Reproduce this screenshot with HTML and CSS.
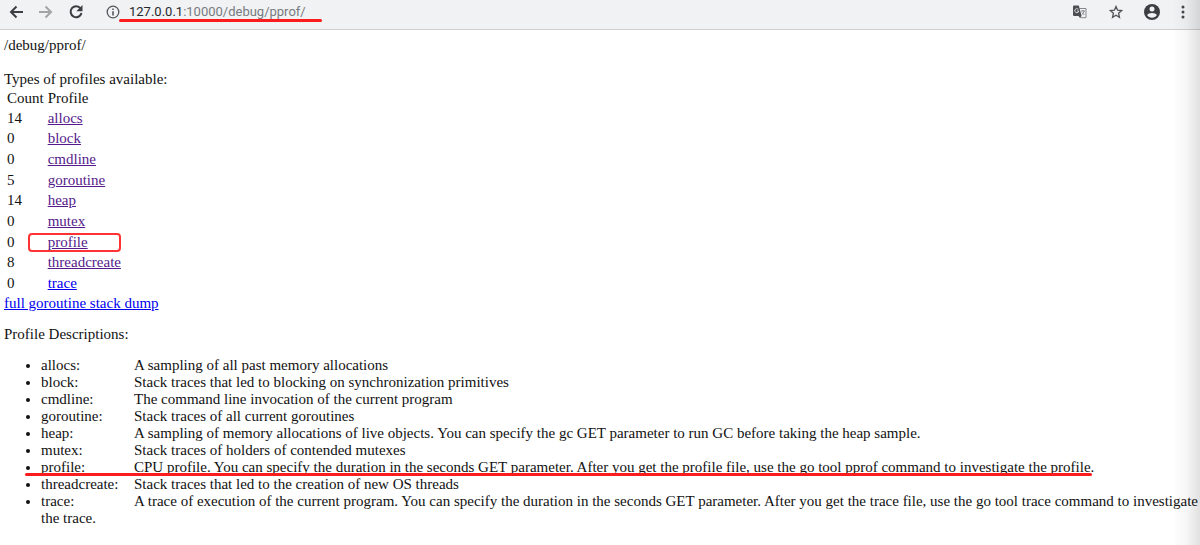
FILE: index.html
```html
<!DOCTYPE html>
<html lang="en">
<head>
<meta charset="utf-8">
<title>/debug/pprof/</title>
<link rel="stylesheet" href="styles.css">
</head>
<body>
<header class="toolbar">
  <button class="tool" aria-label="Back"><svg width="16" height="16" viewBox="0 0 16 16" fill="none" stroke="#3c3f42" stroke-width="2"><path d="M15 8H3M8.500 2.500L3 8l5.500 5.500"/></svg></button>
  <button class="tool" aria-label="Forward"><svg width="16" height="16" viewBox="0 0 16 16" fill="none" stroke="#a2a4a6" stroke-width="2"><path d="M1 8h12M7.500 2.500L13 8l-5.500 5.500"/></svg></button>
  <button class="tool" aria-label="Reload"><svg width="16" height="16" viewBox="0 0 16 16"><path d="M12.600 4.500A5.500 5.500 0 1 0 13.500 9" fill="none" stroke="#3c3f42" stroke-width="2"/><path d="M14.500 1v6.200H8.300z" fill="#3c3f42"/></svg></button>
  <div class="omnibox">
    <button class="tool" aria-label="Site information"><svg width="14" height="14" viewBox="0 0 14 14"><circle cx="7" cy="7" r="5.800" fill="none" stroke="#55585b" stroke-width="1.300"/><path d="M6.200 6.200h1.600v4.200H6.200zM6.200 3.600h1.600v1.500H6.200z" fill="#55585b"/></svg></button>
    <div class="address marked" role="textbox" contenteditable="true" spellcheck="false" aria-label="Address"><span class="host">127.0.0.1</span>:10000/debug/pprof/</div>
  </div>
  <div class="actions">
    <button class="tool" aria-label="Translate"><svg width="16" height="16" viewBox="0 0 16 16"><path d="M7.500 4.500H14v9.200H8.500" fill="#f1f2f4" stroke="#85888b"/><path d="M9 7h4M11 6v1M12.200 7.200c-.4 1.500-1.300 2.600-2.400 3.300M10 8.500l2.500 2.500" fill="none" stroke="#85888b"/><path d="M2 1.500h4.800L9.600 12H2a1 1 0 0 1-1-1V2.500a1 1 0 0 1 1-1z" fill="#4c4f52"/><path d="M6.300 5.300A2 2 0 1 0 6.800 7H5" fill="none" stroke="#d5d7d9"/><path d="M6.500 12h3l-1.500 2z" fill="#4c4f52"/></svg></button>
    <button class="tool" aria-label="Bookmark this page"><svg width="14" height="14" viewBox="0 0 14 14"><path d="M7 1.500l1.600 3.700 4 .4-3 2.700.9 4L7 10.200l-3.500 2.100.9-4-3-2.700 4-.4z" fill="none" stroke="#505356" stroke-width="1.300"/></svg></button>
    <button class="tool" aria-label="Profile"><svg width="16" height="16" viewBox="0 0 16 16"><circle cx="8" cy="8" r="8" fill="#3c3f42"/><circle cx="8" cy="5" r="2.500" fill="#f1f2f4"/><path d="M3.200 11.200C3.700 9.600 5.700 8.900 8 8.900s4.300.7 4.800 2.300C11.800 12.800 10 13.700 8 13.700s-3.800-.9-4.800-2.500z" fill="#f1f2f4"/></svg></button>
    <button class="tool" aria-label="Menu"><svg width="4" height="14" viewBox="0 0 4 14" fill="#45484b"><circle cx="2" cy="2" r="1.500"/><circle cx="2" cy="7" r="1.500"/><circle cx="2" cy="12" r="1.500"/></svg></button>
  </div>
</header>
<main class="page">
  <p class="path">/debug/pprof/</p>
  <p class="intro">Types of profiles available:</p>
  <table class="profiles">
    <thead><tr><th>Count</th><th>Profile</th></tr></thead>
    <tbody>
      <tr><td>14</td><td><a class="visited" href="#allocs">allocs</a></td></tr>
      <tr><td>0</td><td><a class="visited" href="#block">block</a></td></tr>
      <tr><td>0</td><td><a class="visited" href="#cmdline">cmdline</a></td></tr>
      <tr><td>5</td><td><a class="visited" href="#goroutine">goroutine</a></td></tr>
      <tr><td>14</td><td><a class="visited" href="#heap">heap</a></td></tr>
      <tr><td>0</td><td><a class="visited" href="#mutex">mutex</a></td></tr>
      <tr><td>0</td><td class="boxed"><a class="visited" href="#profile">profile</a></td></tr>
      <tr><td>8</td><td><a class="visited" href="#threadcreate">threadcreate</a></td></tr>
      <tr><td>0</td><td><a href="#trace">trace</a></td></tr>
    </tbody>
  </table>
  <a href="#stack">full goroutine stack dump</a>
  <p class="heading">Profile Descriptions:</p>
  <ul class="descriptions">
    <li><span class="name">allocs:</span>A sampling of all past memory allocations</li>
    <li><span class="name">block:</span>Stack traces that led to blocking on synchronization primitives</li>
    <li><span class="name">cmdline:</span>The command line invocation of the current program</li>
    <li><span class="name">goroutine:</span>Stack traces of all current goroutines</li>
    <li><span class="name">heap:</span>A sampling of memory allocations of live objects. You can specify the gc GET parameter to run GC before taking the heap sample.</li>
    <li><span class="name">mutex:</span>Stack traces of holders of contended mutexes</li>
    <li><span class="underlined"><span class="name">profile:</span>CPU profile. You can specify the duration in the seconds GET parameter. After you get the profile file, use the go tool pprof command to investigate the profile.</span></li>
    <li><span class="name">threadcreate:</span>Stack traces that led to the creation of new OS threads</li>
    <li><span class="name">trace:</span>A trace of execution of the current program. You can specify the duration in the seconds GET parameter. After you get the trace file, use the go tool trace command to investigate the trace.</li>
  </ul>
</main>
</body>
</html>
```
FILE: styles.css
```css
* { box-sizing: border-box; }

body {
  margin: 0;
  position: relative;
  min-height: 100vh;
  background: #fff;
  color: #111;
  font: 15px/17px "Liberation Serif", "Times New Roman", serif;
}

/* Soft shade along the right edge of the window */
body::after {
  content: "";
  position: absolute;
  inset: 0 0 0 auto;
  width: 28px;
  background: linear-gradient(to right, rgba(0, 0, 0, 0), rgba(0, 0, 0, 0.03) 50%, rgba(0, 0, 0, 0.12));
  pointer-events: none;
}

.toolbar {
  display: flex;
  align-items: center;
  gap: 14px;
  height: 30px;
  padding: 0 15px 6px 8px;
  border-bottom: 1px solid #cfcfcf;
  background: #f1f2f4;
}

.tool {
  display: flex;
  padding: 0;
  border: 0;
  background: none;
}

.omnibox {
  display: flex;
  flex: 1;
  align-items: center;
  gap: 9px;
  margin-left: 8px;
}

.address {
  position: relative;
  color: #777b80;
  font: 13px/18px Roboto, sans-serif;
  white-space: nowrap;
  outline: 0;
}

.host { color: #26292c; }

.marked::after,
.underlined::after {
  content: "";
  position: absolute;
  height: 3px;
  border-radius: 2px;
  background: #fb1d1d;
}

.marked::after { left: -10px; right: -16px; bottom: -1px; }

.actions {
  display: flex;
  align-items: center;
  gap: 21px;
}

.page { padding: 7px 0 16px 4px; }

p { margin: 0; }

.path { margin-bottom: 17px; }

a { color: #00e; }

.visited { color: #551a8b; }

.profiles {
  height: 207px;
  border-spacing: 2px;
}

.profiles th,
.profiles td {
  padding: 0 1px;
  font-weight: normal;
  text-align: left;
}

.boxed { position: relative; }

.boxed::after {
  content: "";
  position: absolute;
  inset: 0 1px 0 -19px;
  border: 2px solid #f33;
  border-radius: 4px;
  pointer-events: none;
}

.heading { margin: 14px 0; }

.descriptions {
  margin: 0;
  padding-left: 37px;
}

.name {
  display: inline-block;
  width: 93px;
}

.underlined { position: relative; }

.underlined::after { left: -16px; right: 2px; bottom: -1px; }
```
